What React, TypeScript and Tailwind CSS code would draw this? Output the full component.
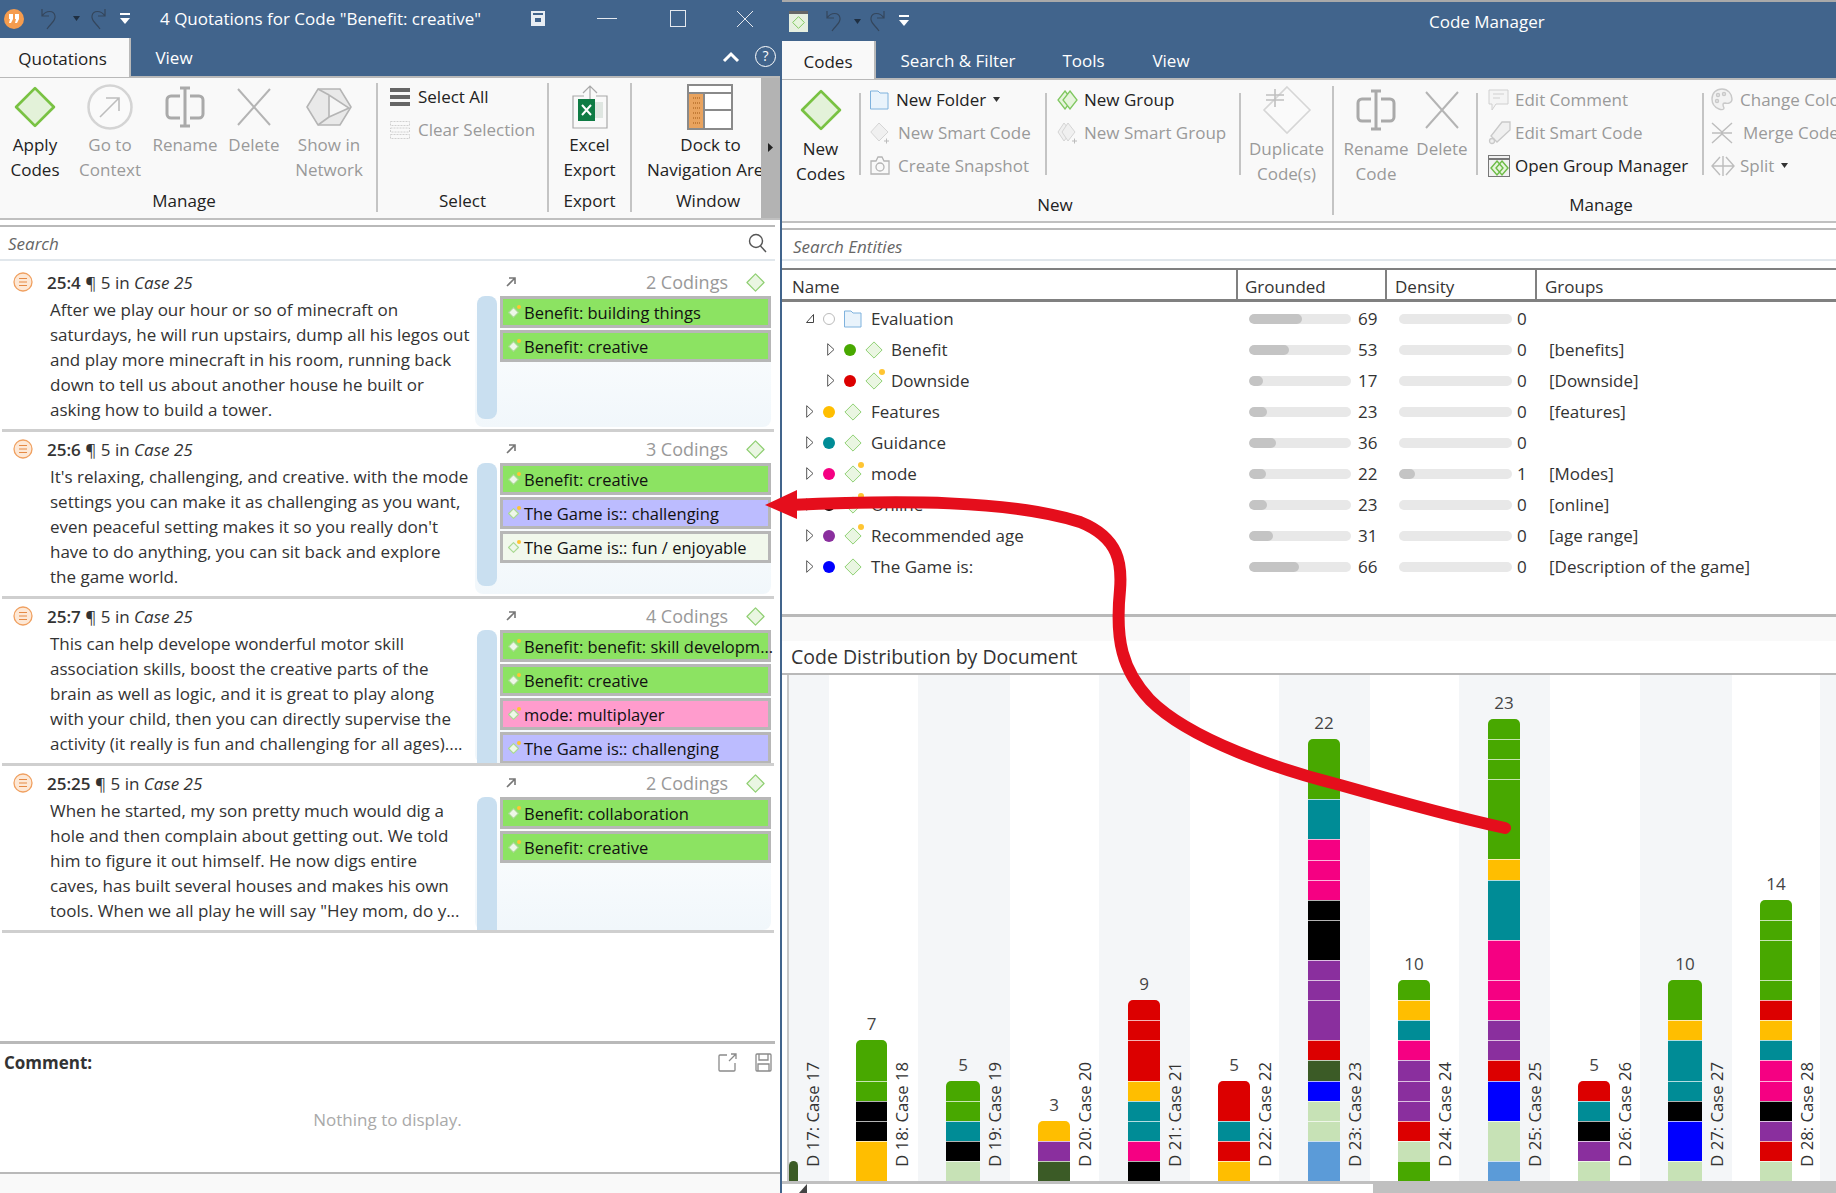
import React from "react";

const G = "bg-[#48a800]", T = "bg-[#008c96]", P = "bg-[#f50082]", K = "bg-[#000000]", U = "bg-[#8a2f9e]", R = "bg-[#dc0000]", Y = "bg-[#ffbe00]", D = "bg-[#3b5b26]", B = "bg-[#0000ff]", L = "bg-[#c7e2b6]", S = "bg-[#5b9bd8]";

type Seg = [string, number];

function Diamond({ size, stroke = "#7fc75f", fill = "#e6f4dc", sw = 3 }: { size: number; stroke?: string; fill?: string; sw?: number }) {
  return (
    <svg width={size} height={size} viewBox="0 0 40 40" className="shrink-0">
      <path d="M20 2 L38 20 L20 38 L2 20 Z" fill={fill} stroke={stroke} strokeWidth={sw} strokeLinejoin="round" />
    </svg>
  );
}

function Undo({ flip = false }: { flip?: boolean }) {
  return (
    <svg width="20" height="24" viewBox="0 0 20 24" fill="none" stroke="#34465c" strokeWidth="1.2" style={flip ? { transform: "scaleX(-1)" } : undefined}>
      <path d="M3 2 L3 9 L10 9 M3 9 C7 3 15 3 16 9 C17 14 11 17 8 22" />
    </svg>
  );
}

function QuickMenu() {
  return (
    <svg width="12" height="14" viewBox="0 0 12 14" fill="white">
      <rect x="1" y="1" width="10" height="2" />
      <path d="M1 6 H11 L6 12 Z" />
    </svg>
  );
}

function Caret({ color = "#333" }: { color?: string }) {
  return (
    <svg width="7" height="5" viewBox="0 0 7 5" fill={color}>
      <path d="M0 0 H7 L3.5 5 Z" />
    </svg>
  );
}

function RenameIcon() {
  return (
    <svg width="40" height="42" viewBox="0 0 40 42" fill="none" stroke="#aaaaaa" strokeWidth="3">
      <path d="M15 10 H6 a4 4 0 0 0 -4 4 V28 a4 4 0 0 0 4 4 H15 M25 10 H34 a4 4 0 0 1 4 4 V28 a4 4 0 0 1 -4 4 H25 M20 2 V40 M15 2 H25 M15 40 H25" />
    </svg>
  );
}

function DeleteIcon({ s = 36 }: { s?: number }) {
  return (
    <svg width={s} height={s + 4} viewBox="0 0 36 40" fill="none" stroke="#b4b4b4" strokeWidth="2">
      <path d="M2 2 L34 38 M34 2 L2 38" />
    </svg>
  );
}

function LargeBtn({ w, icon, lines, dim, boxH = "h-[52px]" }: { w: string; icon: React.ReactNode; lines: string[]; dim?: boolean; boxH?: string }) {
  return (
    <div className={`${w} flex flex-col items-center pt-[4px] shrink-0`}>
      <div className={`${boxH} flex items-center justify-center`}>{icon}</div>
      {lines.map((l) => (
        <div key={l} className={`h-[25px] leading-[25px] whitespace-nowrap ${dim ? "text-[#9a9a9a]" : "text-[#222]"}`}>{l}</div>
      ))}
    </div>
  );
}

function VDiv({ h = "h-[82px]", m = "mt-[13px]" }: { h?: string; m?: string }) {
  return <div className={`w-[2px] ${h} ${m} bg-[#c4c4c4] shrink-0`} />;
}

function SmallItem({ icon, text, dim, caret, iconW, pl }: { icon: React.ReactNode; text: string; dim?: boolean; caret?: boolean; iconW: string; pl: string }) {
  return (
    <div className={`flex items-center h-[33px] whitespace-nowrap ${pl}`}>
      <div className={`${iconW} flex items-center justify-center shrink-0`}>{icon}</div>
      <span className={dim ? "text-[#9a9a9a]" : "text-[#222]"}>{text}</span>
      {caret && <span className="ml-[7px] flex"><Caret /></span>}
    </div>
  );
}

function GroupLabel({ children, w }: { children: React.ReactNode; w: string }) {
  return <div className={`${w} h-[30px] leading-[30px] text-center text-[#222]`}>{children}</div>;
}

function Tab({ children, active, w }: { children: React.ReactNode; active?: boolean; w: string }) {
  return active ? (
    <div className={`${w} h-full bg-[#f9f9f9] border-r-2 border-[#b9b9b9] flex items-center justify-center pt-[2px] text-[#222] relative z-10 -mb-[2px] shrink-0`}>{children}</div>
  ) : (
    <div className={`${w} h-full flex items-center justify-center pt-[2px] text-white whitespace-nowrap shrink-0`}>{children}</div>
  );
}

function Chip({ text, tone }: { text: string; tone: string }) {
  return (
    <div className={`h-[32px] w-[271px] border-[3px] border-[#b7b7b7] ${tone} flex items-center pl-[5px] whitespace-nowrap text-[#111] text-[16.5px] shrink-0`}>
      <span className="relative mr-[5px] flex">
        <Diamond size={11} stroke="#a9d992" fill="#eef7e8" sw={4} />
        <span className="absolute -right-[2px] -top-[2px] w-[4px] h-[4px] rounded-full bg-[#ffc533]" />
      </span>
      {text}
    </div>
  );
}

const green = "bg-[#8ce362]", lilac = "bg-[#bcbcff]", pink = "bg-[#ff9ccd]", pale = "bg-[#f1f8ec]";

function QuoteRow({ id, count, lines, chips, fullBar }: { id: string; count: string; lines: string[]; chips: [string, string][]; fullBar?: boolean }) {
  return (
    <div className="h-[167px] w-[772px] ml-[2px] border-b-[3px] border-[#cfcfcf] flex flex-col shrink-0 overflow-hidden">
      <div className="h-[31px] flex items-center shrink-0 pt-[3px] text-[#333]">
        <div className="w-[11px] shrink-0" />
        <svg width="20" height="20" viewBox="0 0 20 20" className="shrink-0" fill="none">
          <circle cx="10" cy="10" r="9" fill="#fde8d6" stroke="#f0a060" strokeWidth="1.3" />
          <path d="M6 6.5 H14 M6 10 H14 M6 13.5 H14" stroke="#e58a45" strokeWidth="1.1" />
        </svg>
        <div className="w-[14px] shrink-0" />
        <div className="w-[458px] shrink-0 whitespace-nowrap">
          <span className="font-semibold">{id}</span> <span>¶ 5 in </span><span className="italic">Case 25</span>
        </div>
        <svg width="12" height="12" viewBox="0 0 12 12" className="shrink-0" fill="none" stroke="#777" strokeWidth="1.6">
          <path d="M2 10 L10 2 M4 2 H10 V8" />
        </svg>
        <div className="w-[211px] text-right text-[#999] text-[18px] whitespace-nowrap shrink-0">{count}</div>
        <div className="w-[18px] shrink-0" />
        <Diamond size={19} stroke="#8fcf72" fill="#eaf6e2" sw={2.5} />
      </div>
      <div className="flex flex-1 min-h-0">
        <div className="w-[473px] shrink-0 pl-[48px] pt-[1px] text-[#333] whitespace-nowrap">
          {lines.map((l) => (
            <div key={l} className="h-[25px] leading-[25px]">{l}</div>
          ))}
        </div>
        <div className={`w-[296px] flex rounded-b-[8px] bg-gradient-to-b from-[#ffffff] to-[#f1f7fb] ${fullBar ? "" : "mb-[2px]"}`}>
          <div className={`w-[20px] ml-[2px] bg-[#c9dff0] shrink-0 ${fullBar ? "rounded-t-[8px]" : "rounded-[8px] mb-[8px]"}`} />
          <div className="ml-[3px] flex flex-col gap-[2px]">
            {chips.map(([t, c]) => (
              <Chip key={t} text={t} tone={c} />
            ))}
          </div>
        </div>
      </div>
    </div>
  );
}

function LeftWindow() {
  return (
    <div className="w-[780px] h-full flex flex-col shrink-0 bg-white overflow-hidden">
      <div className="h-[37px] bg-[#41648c] flex items-center text-white shrink-0">
        <div className="ml-[4px] w-[20px] h-[20px] rounded-full bg-[#f59c4e] flex items-center justify-center shrink-0">
          <svg width="12" height="10" viewBox="0 0 12 10" fill="white"><path d="M1 0 H5 V5 L3 9 H1 L2 5 H1 Z M7 0 H11 V5 L9 9 H7 L8 5 H7 Z" /></svg>
        </div>
        <div className="ml-[15px] flex"><Undo /></div>
        <div className="ml-[14px] flex"><Caret color="#1f2f42" /></div>
        <div className="ml-[8px] flex"><Undo flip /></div>
        <div className="ml-[11px] flex"><QuickMenu /></div>
        <div className="ml-[29px] w-[370px] whitespace-nowrap">4 Quotations for Code "Benefit: creative"</div>
        <svg width="16" height="17" viewBox="0 0 16 17" className="shrink-0" fill="none">
          <rect x="1" y="1" width="14" height="15" fill="#e8edf3" />
          <rect x="3" y="3" width="10" height="2" fill="#41648c" />
          <rect x="5" y="8" width="6" height="4" fill="#41648c" />
        </svg>
        <div className="ml-[51px] w-[20px] h-[1px] bg-[#e5e9ef] shrink-0" />
        <div className="ml-[53px] w-[16px] h-[17px] border border-[#e5e9ef] shrink-0" />
        <svg width="18" height="18" viewBox="0 0 18 18" className="ml-[50px] shrink-0" stroke="#e5e9ef" strokeWidth="1"><path d="M1 1 L17 17 M17 1 L1 17" /></svg>
      </div>
      <div className="h-[41px] bg-[#41648c] flex items-center border-b-2 border-[#b9b9b9] shrink-0">
        <Tab active w="w-[131px] pr-[4px]">Quotations</Tab>
        <div className="w-[24px] shrink-0" />
        <Tab w="w-[38px]">View</Tab>
        <div className="flex-1" />
        <svg width="18" height="12" viewBox="0 0 18 12" fill="none" stroke="white" strokeWidth="3"><path d="M2 10 L9 3 L16 10" /></svg>
        <div className="ml-[15px] mr-[4px] w-[21px] h-[21px] rounded-full border-[1.5px] border-white text-white text-[14px] leading-[18px] text-center">?</div>
      </div>
      <div className="h-[140px] bg-[#f9f9f9] flex shrink-0 overflow-hidden">
        <div className="w-[376px] flex flex-col shrink-0">
          <div className="h-[108px] flex">
            <LargeBtn w="w-[70px]" boxH="h-[50px]" icon={<Diamond size={42} stroke="#79c243" fill="#e3f2d9" sw={2.6} />} lines={["Apply", "Codes"]} />
            <LargeBtn w="w-[80px]" boxH="h-[50px]" dim icon={
              <svg width="46" height="46" viewBox="0 0 46 46" fill="none"><circle cx="23" cy="23" r="21.5" fill="#fafafa" stroke="#d4d4d4" strokeWidth="2.5" /><path d="M13 33 L32 14 M19 14 H32 V27" stroke="#bdbdbd" strokeWidth="1.6" /></svg>
            } lines={["Go to", "Context"]} />
            <LargeBtn w="w-[70px]" boxH="h-[50px]" dim icon={<RenameIcon />} lines={["Rename"]} />
            <LargeBtn w="w-[68px]" boxH="h-[50px]" dim icon={<DeleteIcon />} lines={["Delete"]} />
            <LargeBtn w="w-[82px]" boxH="h-[50px]" dim icon={
              <svg width="46" height="40" viewBox="0 0 46 40" fill="#e9e9e9" stroke="#b5b5b5" strokeWidth="1.6"><path d="M12 2 H34 L45 20 L34 38 H12 L1 20 Z" /><path d="M23 8 L23 30 L43 21 Z M12 2 L23 8 M12 38 L23 30" fill="#f6f6f6" /></svg>
            } lines={["Show in", "Network"]} />
          </div>
          <GroupLabel w="w-[368px]">Manage</GroupLabel>
        </div>
        <VDiv h="h-[129px]" m="mt-[5px]" />
        <div className="w-[169px] flex flex-col shrink-0">
          <div className="h-[108px] pt-[2px]">
            <SmallItem pl="pl-[12px]" iconW="w-[28px] justify-start" text="Select All" icon={
              <svg width="20" height="18" viewBox="0 0 20 18" fill="#666"><rect y="0" width="20" height="4" /><rect y="7" width="20" height="4" /><rect y="14" width="20" height="4" /></svg>
            } />
            <SmallItem pl="pl-[12px]" iconW="w-[28px] justify-start" dim text="Clear Selection" icon={
              <svg width="20" height="18" viewBox="0 0 20 18" fill="none" stroke="#d0d0d0" strokeDasharray="2 1"><rect x="0.5" y="0.5" width="19" height="4" /><rect x="0.5" y="7" width="19" height="4" /><rect x="0.5" y="13.5" width="19" height="4" /></svg>
            } />
          </div>
          <GroupLabel w="w-full">Select</GroupLabel>
        </div>
        <VDiv h="h-[129px]" m="mt-[5px]" />
        <div className="w-[81px] flex flex-col shrink-0">
          <div className="h-[108px]">
            <LargeBtn w="w-[81px]" boxH="h-[50px]" icon={
              <svg width="38" height="46" viewBox="0 0 38 46" fill="none"><path d="M13 12 H2 V44 H36 V12 H25 M19 22 V2 M12 9 L19 2 L26 9" stroke="#a9a9a9" strokeWidth="1.2" /><rect x="7" y="15" width="17" height="22" fill="#0f7b44" /><rect x="24" y="18" width="8" height="16" fill="#dfe6e1" /><path d="M11 21 L20 31 M20 21 L11 31" stroke="white" strokeWidth="2" /></svg>
            } lines={["Excel", "Export"]} />
          </div>
          <GroupLabel w="w-full">Export</GroupLabel>
        </div>
        <VDiv h="h-[129px]" m="mt-[5px]" />
        <div className="w-[129px] flex flex-col shrink-0 overflow-hidden">
          <div className="h-[108px] pt-[4px] flex flex-col">
            <div className="h-[50px] flex items-center justify-center pl-[26px]">
              <svg width="46" height="46" viewBox="0 0 46 46" fill="none"><rect x="1" y="1" width="44" height="44" fill="white" stroke="#8a8a8a" strokeWidth="2" /><rect x="2" y="10" width="15" height="34" fill="#e9a35e" /><path d="M1 9 H45 M17 9 V45 M17 26 H45" stroke="#8a8a8a" strokeWidth="2" /><path d="M6 14 H13 M6 19 H13 M6 24 H13 M6 29 H13 M6 34 H13 M6 39 H13" stroke="#c47c37" strokeDasharray="1 1" strokeWidth="2" /></svg>
            </div>
            <div className="h-[25px] leading-[25px] text-center pl-[28px] text-[#222]">Dock to</div>
            <div className="h-[25px] leading-[25px] whitespace-nowrap pl-[15px] text-[#222]">Navigation Area</div>
          </div>
          <GroupLabel w="w-[152px]">Window</GroupLabel>
        </div>
        <div className="w-[19px] bg-[#b3b3b3] flex items-center justify-center pb-[2px] shrink-0">
          <svg width="5" height="9" viewBox="0 0 5 9" fill="#222"><path d="M0 0 L5 4.5 L0 9 Z" /></svg>
        </div>
      </div>
      <div className="h-[2px] bg-[#c0c0c0] shrink-0" />
      <div className="h-[5px] shrink-0" />
      <div className="h-[36px] w-[775px] border-t-2 border-b-2 border-t-[#b9b9b9] border-b-[#e1e7ec] flex items-center justify-between pl-[8px] pr-[8px] shrink-0">
        <span className="italic text-[#666]">Search</span>
        <svg width="19" height="20" viewBox="0 0 19 20" fill="none" stroke="#555" strokeWidth="1.4"><circle cx="8" cy="8" r="6.5" /><path d="M12.5 13 L18 19" /></svg>
      </div>
      <div className="h-[4px] shrink-0" />
      <QuoteRow id="25:4" count="2 Codings" chips={[["Benefit: building things", green], ["Benefit: creative", green]]} lines={["After we play our hour or so of minecraft on", "saturdays, he will run upstairs, dump all his legos out", "and play more minecraft in his room, running back", "down to tell us about another house he built or", "asking how to build a tower."]} />
      <QuoteRow id="25:6" count="3 Codings" chips={[["Benefit: creative", green], ["The Game is:: challenging", lilac], ["The Game is:: fun / enjoyable", pale]]} lines={["It's relaxing, challenging, and creative. with the mode", "settings you can make it as challenging as you want,", "even peaceful setting makes it so you really don't", "have to do anything, you can sit back and explore", "the game world."]} />
      <QuoteRow id="25:7" count="4 Codings" fullBar chips={[["Benefit: benefit: skill developm...", green], ["Benefit: creative", green], ["mode: multiplayer", pink], ["The Game is:: challenging", lilac]]} lines={["This can help develope wonderful motor skill", "association skills, boost the creative parts of the", "brain as well as logic, and it is great to play along", "with your child, then you can directly supervise the", "activity (it really is fun and challenging for all ages)...."]} />
      <QuoteRow id="25:25" count="2 Codings" fullBar chips={[["Benefit: collaboration", green], ["Benefit: creative", green]]} lines={["When he started, my son pretty much would dig a", "hole and then complain about getting out. We told", "him to figure it out himself. He now digs entire", "caves, has built several houses and makes his own", "tools. When we all play he will say \"Hey mom, do y..."]} />
      <div className="flex-1" />
      <div className="h-[131px] w-[775px] border-t-[3px] border-[#b9b9b9] flex flex-col shrink-0">
        <div className="h-[36px] flex items-center justify-between pl-[4px] pr-[3px]">
          <span className="font-bold text-[#333]">Comment:</span>
          <div className="flex items-center gap-[18px]">
            <svg width="19" height="19" viewBox="0 0 19 19" fill="none" stroke="#8a8a8a" strokeWidth="1.3"><path d="M9 2 H2 a1 1 0 0 0 -1 1 V17 a1 1 0 0 0 1 1 H16 a1 1 0 0 0 1 -1 V10 M11 8 L18 1 M13 1 H18 V6" /></svg>
            <svg width="17" height="19" viewBox="0 0 17 19" fill="none" stroke="#8a8a8a" strokeWidth="1.3"><path d="M2 1 H15 a1 1 0 0 1 1 1 V17 a1 1 0 0 1 -1 1 H2 a1 1 0 0 1 -1 -1 V2 a1 1 0 0 1 1 -1 Z M4 1 V7 H13 V1 M3 18 V11 H14 V18" /></svg>
          </div>
        </div>
        <div className="flex-1 flex justify-center pt-[27px] text-[#a9a9a9]">
          <span className="h-[25px] leading-[25px]">Nothing to display.</span>
        </div>
      </div>
      <div className="h-[2px] bg-[#b9b9b9] shrink-0" />
      <div className="h-[19px] bg-[#f9f9f9] shrink-0" />
    </div>
  );
}

type TreeRow = { name: string; level: number; color: string; star?: boolean; g: string; gw: string; d: string; dw?: string; group?: string; folder?: boolean };

const treeRows: TreeRow[] = [
  { name: "Evaluation", level: 0, color: "", folder: true, g: "69", gw: "w-[53px]", d: "0" },
  { name: "Benefit", level: 1, color: "bg-[#48a800]", g: "53", gw: "w-[40px]", d: "0", group: "[benefits]" },
  { name: "Downside", level: 1, color: "bg-[#dc0000]", star: true, g: "17", gw: "w-[14px]", d: "0", group: "[Downside]" },
  { name: "Features", level: 0, color: "bg-[#ffbe00]", g: "23", gw: "w-[18px]", d: "0", group: "[features]" },
  { name: "Guidance", level: 0, color: "bg-[#008c96]", g: "36", gw: "w-[27px]", d: "0" },
  { name: "mode", level: 0, color: "bg-[#f50082]", star: true, g: "22", gw: "w-[17px]", d: "1", dw: "w-[16px]", group: "[Modes]" },
  { name: "Online", level: 0, color: "bg-[#000000]", star: true, g: "23", gw: "w-[18px]", d: "0", group: "[online]" },
  { name: "Recommended age", level: 0, color: "bg-[#8a2f9e]", star: true, g: "31", gw: "w-[24px]", d: "0", group: "[age range]" },
  { name: "The Game is:", level: 0, color: "bg-[#0000ff]", g: "66", gw: "w-[50px]", d: "0", group: "[Description of the game]" },
];

function Track({ w, fill }: { w: string; fill?: string }) {
  return (
    <div className={`${w} h-[10px] rounded-[5px] bg-[#e8e8e8] overflow-hidden shrink-0`}>
      {fill && <div className={`${fill} h-full rounded-[5px] bg-[#c4c4c4]`} />}
    </div>
  );
}

function TreeLine({ r }: { r: TreeRow }) {
  return (
    <div className="h-[31px] flex items-center text-[#333] whitespace-nowrap shrink-0">
      <div className={`w-[456px] flex items-center shrink-0 ${r.level === 1 ? "pl-[45px]" : "pl-[24px]"}`}>
        {r.folder ? (
          <svg width="8" height="9" viewBox="0 0 8 9" className="shrink-0" fill="none" stroke="#444"><path d="M7.5 0.5 V8.5 H0.5 Z" /></svg>
        ) : (
          <svg width="8" height="13" viewBox="0 0 8 13" className="shrink-0" fill="none" stroke="#555"><path d="M0.7 0.7 L7 6.5 L0.7 12.3 Z" /></svg>
        )}
        {r.folder ? (
          <div className="ml-[9px] w-[12px] h-[12px] rounded-full border-[1.5px] border-[#bbbbbb] shrink-0" />
        ) : (
          <div className={`ml-[9px] w-[12px] h-[12px] rounded-full ${r.color} shrink-0`} />
        )}
        <div className="ml-[9px] relative flex shrink-0">
          {r.folder ? (
            <svg width="18" height="18" viewBox="0 0 18 18" fill="#e9f3fb" stroke="#7fb2dd"><path d="M0.5 1 H7 L9 3 H17 V17 H0.5 Z" /></svg>
          ) : (
            <Diamond size={18} stroke="#8fcf72" fill="#eaf6e2" sw={2.2} />
          )}
          {r.star && <span className="absolute -right-[2px] -top-[3px] w-[6px] h-[6px] rounded-full bg-[#ffc533]" />}
        </div>
        <span className={r.level === 1 ? "ml-[8px]" : "ml-[9px]"}>{r.name}</span>
      </div>
      <div className="w-[149px] flex items-center pl-[11px] shrink-0">
        <Track w="w-[102px]" fill={r.gw} />
        <span className="ml-[7px]">{r.g}</span>
      </div>
      <div className="w-[150px] flex items-center pl-[12px] shrink-0">
        <Track w="w-[113px]" fill={r.dw} />
        <span className="ml-[5px]">{r.d}</span>
      </div>
      <span className="pl-[12px]">{r.group}</span>
    </div>
  );
}

type Col = { n: number | null; label: string; band: string; left: string; w: string; segs: Seg[]; shade: boolean };

const cols: Col[] = [
  { n: null, label: "D 17: Case 17", band: "w-[40px]", left: "pl-[0px]", w: "w-[9px]", shade: true, segs: [[D, 1]] },
  { n: 7, label: "D 18: Case 18", band: "w-[89px]", left: "pl-[27px]", w: "w-[31px]", shade: false, segs: [[G, 2], [G, 1], [K, 1], [K, 1], [Y, 2]] },
  { n: 5, label: "D 19: Case 19", band: "w-[92px]", left: "pl-[28px]", w: "w-[34px]", shade: true, segs: [[G, 1], [G, 1], [T, 1], [K, 1], [L, 1]] },
  { n: 3, label: "D 20: Case 20", band: "w-[89px]", left: "pl-[28px]", w: "w-[32px]", shade: false, segs: [[Y, 1], [U, 1], [D, 1]] },
  { n: 9, label: "D 21: Case 21", band: "w-[91px]", left: "pl-[29px]", w: "w-[32px]", shade: true, segs: [[R, 1], [R, 1], [R, 2], [Y, 1], [T, 1], [T, 1], [P, 1], [K, 1]] },
  { n: 5, label: "D 22: Case 22", band: "w-[89px]", left: "pl-[28px]", w: "w-[32px]", shade: false, segs: [[R, 2], [T, 1], [R, 1], [Y, 1]] },
  { n: 22, label: "D 23: Case 23", band: "w-[91px]", left: "pl-[29px]", w: "w-[32px]", shade: true, segs: [[G, 3], [T, 2], [P, 1], [P, 1], [P, 1], [K, 1], [K, 2], [U, 1], [U, 1], [U, 2], [R, 1], [D, 1], [B, 1], [L, 1], [L, 1], [S, 2]] },
  { n: 10, label: "D 24: Case 24", band: "w-[89px]", left: "pl-[28px]", w: "w-[32px]", shade: false, segs: [[G, 1], [Y, 1], [T, 1], [P, 1], [U, 1], [U, 1], [U, 1], [R, 1], [L, 1], [G, 1]] },
  { n: 23, label: "D 25: Case 25", band: "w-[91px]", left: "pl-[29px]", w: "w-[32px]", shade: true, segs: [[G, 1], [G, 1], [G, 1], [G, 4], [Y, 1], [T, 3], [P, 2], [P, 1], [P, 1], [U, 1], [U, 1], [R, 1], [B, 2], [L, 2], [S, 1]] },
  { n: 5, label: "D 26: Case 26", band: "w-[90px]", left: "pl-[28px]", w: "w-[32px]", shade: false, segs: [[R, 1], [T, 1], [K, 1], [U, 1], [L, 1]] },
  { n: 10, label: "D 27: Case 27", band: "w-[92px]", left: "pl-[28px]", w: "w-[34px]", shade: true, segs: [[G, 2], [Y, 1], [T, 2], [T, 1], [K, 1], [B, 2], [L, 1]] },
  { n: 14, label: "D 28: Case 28", band: "w-[88px]", left: "pl-[28px]", w: "w-[32px]", shade: false, segs: [[G, 1], [G, 1], [G, 2], [G, 1], [R, 1], [Y, 1], [T, 1], [P, 1], [P, 1], [K, 1], [U, 1], [R, 1], [L, 1]] },
];

function Column({ c }: { c: Col }) {
  return (
    <div className={`${c.band} ${c.left} ${c.shade ? "bg-[#f4f6f8]" : "bg-white"} h-full flex items-end shrink-0`}>
      <div className={`${c.w} flex flex-col items-center shrink-0`}>
        {c.n !== null && <div className="h-[24px] leading-[24px] mb-[4px] text-[#444]">{c.n}</div>}
        <div className="w-full flex flex-col rounded-t-[5px] overflow-hidden">
          {c.segs.map(([color, u], i) => (
            <div key={i} className={`${color} ${i > 0 ? "border-t border-white/70" : ""}`} style={{ height: u * 20.1 }} />
          ))}
        </div>
      </div>
      <div className="ml-[7px] mb-[14px] w-[16px] [writing-mode:vertical-rl] rotate-180 whitespace-nowrap text-[16.7px] leading-[16px] text-[#333]">{c.label}</div>
    </div>
  );
}

function RightWindow() {
  return (
    <div className="flex-1 h-full flex flex-col bg-white overflow-hidden min-w-0">
      <div className="h-[2px] bg-[#a9a9a9] shrink-0" />
      <div className="h-[38px] bg-[#41648c] flex items-center text-white relative shrink-0">
        <div className="ml-[7px] w-[19px] h-[21px] bg-[#e6efe0] border-t-[3px] border-[#666] flex items-center justify-center shrink-0">
          <Diamond size={13} stroke="#7fc75f" fill="#e6f4dc" sw={3} />
        </div>
        <div className="ml-[16px] flex"><Undo /></div>
        <div className="ml-[10px] flex"><Caret color="#1f2f42" /></div>
        <div className="ml-[6px] flex"><Undo flip /></div>
        <div className="ml-[11px] flex"><QuickMenu /></div>
        <div className="ml-[519px] whitespace-nowrap">Code Manager</div>
      </div>
      <div className="h-[40px] bg-[#41648c] flex items-center border-b-2 border-[#b9b9b9] shrink-0">
        <Tab active w="w-[94px]">Codes</Tab>
        <div className="w-[25px] shrink-0" />
        <Tab w="w-[114px]">Search &amp; Filter</Tab>
        <div className="w-[48px] shrink-0" />
        <Tab w="w-[41px]">Tools</Tab>
        <div className="w-[48px] shrink-0" />
        <Tab w="w-[38px]">View</Tab>
      </div>
      <div className="h-[141px] bg-[#f9f9f9] flex shrink-0">
        <div className="w-[550px] flex flex-col shrink-0">
          <div className="h-[110px] flex">
            <LargeBtn w="w-[77px]" icon={<Diamond size={42} stroke="#79c243" fill="#e3f2d9" sw={2.6} />} lines={["New", "Codes"]} />
            <VDiv />
            <div className="w-[184px] pt-[3px] shrink-0">
              <SmallItem pl="pl-[9px]" iconW="w-[26px] justify-start" caret text="New Folder" icon={
                <svg width="19" height="20" viewBox="0 0 19 20" fill="#e9f3fb" stroke="#7fb2dd"><path d="M0.5 1 H8 L10 3 H18 V19 H0.5 Z" /></svg>
              } />
              <SmallItem pl="pl-[9px]" iconW="w-[28px] justify-start" dim text="New Smart Code" icon={
                <svg width="20" height="22" viewBox="0 0 20 22" fill="#f0f0f0" stroke="#d5d5d5"><path d="M9 1 L18 10 L9 19 L0.8 10 Z" /><path d="M14 19 H19 M16.5 16.5 V21.5" stroke="#bbb" /></svg>
              } />
              <SmallItem pl="pl-[9px]" iconW="w-[28px] justify-start" dim text="Create Snapshot" icon={
                <svg width="20" height="19" viewBox="0 0 20 19" fill="none" stroke="#b4b4b4" strokeWidth="1.3"><path d="M1 5 H6 L8 1 H12 L14 5 H19 V18 H1 Z" /><circle cx="10" cy="11" r="4" /></svg>
              } />
            </div>
            <VDiv />
            <div className="w-[192px] pt-[3px] shrink-0">
              <SmallItem pl="pl-[10px]" iconW="w-[27px] justify-start" text="New Group" icon={
                <svg width="22" height="20" viewBox="0 0 22 20" fill="#e6f4dc" stroke="#7fc75f" strokeWidth="1.3"><path d="M8 1 L15 10 L8 19 L1 10 Z" /><path d="M13 1 L20 10 L13 19 L6 10 Z" /></svg>
              } />
              <SmallItem pl="pl-[10px]" iconW="w-[27px] justify-start" dim text="New Smart Group" icon={
                <svg width="22" height="22" viewBox="0 0 22 22" fill="#f0f0f0" stroke="#d5d5d5"><path d="M7 1 L14 10 L7 19 L1 10 Z" /><path d="M11 1 L18 10 L11 19 L5 10 Z" /><path d="M15 19 H20 M17.5 16.5 V21.5" stroke="#bbb" /></svg>
              } />
            </div>
            <VDiv />
            <LargeBtn w="w-[91px]" dim icon={
              <svg width="50" height="50" viewBox="0 0 50 50" fill="#fafafa" stroke="#d6d6d6" strokeWidth="1.6"><path d="M25 2 L48 25 L25 48 L2 25 Z" /><path d="M13 4 V22 M4 10 H22 M4 15 H22" stroke="#c0c0c0" /></svg>
            } lines={["Duplicate", "Code(s)"]} />
          </div>
          <GroupLabel w="w-[546px]">New</GroupLabel>
        </div>
        <VDiv h="h-[129px]" m="mt-[6px]" />
        <div className="flex flex-col shrink-0 w-[600px]">
          <div className="h-[110px] flex">
            <LargeBtn w="w-[84px]" dim icon={<RenameIcon />} lines={["Rename", "Code"]} />
            <LargeBtn w="w-[48px]" dim icon={<DeleteIcon s={36} />} lines={["Delete"]} />
            <div className="w-[10px]" />
            <VDiv />
            <div className="w-[224px] pt-[3px] shrink-0">
              <SmallItem pl="pl-[10px]" iconW="w-[27px] justify-start" dim text="Edit Comment" icon={
                <svg width="21" height="22" viewBox="0 0 21 22" fill="#f4f4f4" stroke="#d0d0d0"><path d="M1 1 H20 V15 H8 L4 21 V15 H1 Z" /><path d="M5 5 H16 M5 9 H12" /></svg>
              } />
              <SmallItem pl="pl-[10px]" iconW="w-[27px] justify-start" dim text="Edit Smart Code" icon={
                <svg width="23" height="24" viewBox="0 0 23 24" fill="#f0f0f0" stroke="#c9c9c9" strokeWidth="1.3"><path d="M14 1 H22 V9 L9 21 L3 15 Z" /><circle cx="4" cy="20" r="2.5" /></svg>
              } />
              <SmallItem pl="pl-[10px]" iconW="w-[27px] justify-start" text="Open Group Manager" icon={
                <svg width="22" height="22" viewBox="0 0 22 22" fill="#f1f1f1" stroke="#777"><rect x="0.5" y="0.5" width="21" height="21" /><path d="M0.5 4 H21.5" strokeWidth="2" /><path d="M9 6 L15 13 L9 20 L3 13 Z M14 6 L20 13 L14 20 L8 13 Z" fill="#e6f4dc" stroke="#6cbb45" strokeWidth="1.4" /></svg>
              } />
            </div>
            <VDiv />
            <div className="pt-[3px] shrink-0">
              <SmallItem pl="pl-[7px]" iconW="w-[29px] justify-start" dim text="Change Colors" icon={
                <svg width="22" height="23" viewBox="0 0 22 23" fill="#f2f2f2" stroke="#c9c9c9" strokeWidth="1.4"><path d="M11 1 C17 1 21 6 21 11 C21 15 17 16 14 15 C11 15 12 18 13 20 C13 22 10 22 8 21 C3 19 1 15 1 11 C1 5 5 1 11 1 Z" /><circle cx="7" cy="7" r="1.5" /><circle cx="13" cy="6" r="1.5" /><circle cx="6" cy="13" r="1.5" /></svg>
              } />
              <SmallItem pl="pl-[7px]" iconW="w-[32px] justify-start" dim text="Merge Codes" icon={
                <svg width="22" height="22" viewBox="0 0 22 22" fill="none" stroke="#bdbdbd" strokeWidth="1.4"><path d="M1 1 L11 10 L21 1 M1 21 L11 12 L21 21 M1 11 H21" /></svg>
              } />
              <SmallItem pl="pl-[7px]" iconW="w-[29px] justify-start" dim caret text="Split" icon={
                <svg width="24" height="22" viewBox="0 0 24 22" fill="none" stroke="#bdbdbd" strokeWidth="1.4"><path d="M9 2 L1 11 L9 20 M15 2 L23 11 L15 20 M1 11 H23 M12 1 V21" /></svg>
              } />
            </div>
          </div>
          <GroupLabel w="w-[534px]">Manage</GroupLabel>
        </div>
      </div>
      <div className="h-[2px] bg-[#c0c0c0] shrink-0" />
      <div className="h-[5px] shrink-0" />
      <div className="h-[33px] border-t-2 border-b-2 border-t-[#b9b9b9] border-b-[#e1e7ec] flex items-center pl-[11px] pt-[3px] shrink-0">
        <span className="italic text-[#666]">Search Entities</span>
      </div>
      <div className="h-[7px] shrink-0" />
      <div className="h-[34px] border-t-2 border-b-[3px] border-t-[#808080] border-b-[#808080] flex items-end text-[#333] shrink-0">
        <div className="w-[456px] h-full border-r-2 border-[#808080] pl-[10px] leading-[33px]">Name</div>
        <div className="w-[149px] h-full border-r-2 border-[#808080] pl-[7px] leading-[33px]">Grounded</div>
        <div className="w-[150px] h-full border-r-2 border-[#808080] pl-[8px] leading-[33px]">Density</div>
        <div className="pl-[8px] h-full leading-[33px]">Groups</div>
      </div>
      <div className="h-[312px] pt-[1px] flex flex-col shrink-0">
        {treeRows.map((r) => (
          <TreeLine key={r.name} r={r} />
        ))}
      </div>
      <div className="h-[3px] bg-[#b9b9b9] shrink-0" />
      <div className="h-[24px] bg-[#f9f9f9] shrink-0" />
      <div className="h-[32px] flex items-start pl-[9px] pt-[3px] text-[19.5px] leading-[26px] text-[#333] shrink-0">Code Distribution by Document</div>
      <div className="h-[2px] bg-[#b9b9b9] shrink-0" />
      <div className="flex-1 min-h-0 pl-[5px] flex flex-col">
        <div className="flex-1 min-h-0 flex border-l-2 border-[#c8c8c8] overflow-hidden">
          {cols.map((c) => (
            <Column key={c.label} c={c} />
          ))}
          <div className="flex-1 bg-[#f4f6f8]" />
        </div>
      </div>
      <div className="h-[3px] bg-[#c0c0c0] shrink-0" />
      <div className="h-[9px] flex items-center shrink-0">
        <svg width="8" height="9" viewBox="0 0 8 9" fill="#444" className="ml-[17px] shrink-0"><path d="M8 0 V9 H0 Z" /></svg>
        <div className="ml-[566px] flex-1 h-full bg-[#c0c0c0]" />
      </div>
    </div>
  );
}

export default function App() {
  return (
    <div className="relative w-[1836px] h-[1193px] flex overflow-hidden bg-white font-['Open_Sans',sans-serif] text-[17px] leading-[25px]">
      <LeftWindow />
      <div className="w-[2px] h-full bg-[#41648c] shrink-0" />
      <RightWindow />
      <svg className="absolute left-0 top-0 pointer-events-none" width="1836" height="1193" viewBox="0 0 1836 1193" fill="none">
        <path d="M790 505 C 900 500, 1010 500, 1080 522 C 1120 538, 1122 565, 1120 590 C 1115 640, 1122 670, 1150 700 C 1190 740, 1280 770, 1340 785 C 1400 802, 1450 816, 1505 828" stroke="#e50e1c" strokeWidth="12" strokeLinecap="round" />
        <path d="M765 505 L797 490 L797 519 Z" fill="#e50e1c" />
      </svg>
    </div>
  );
}
